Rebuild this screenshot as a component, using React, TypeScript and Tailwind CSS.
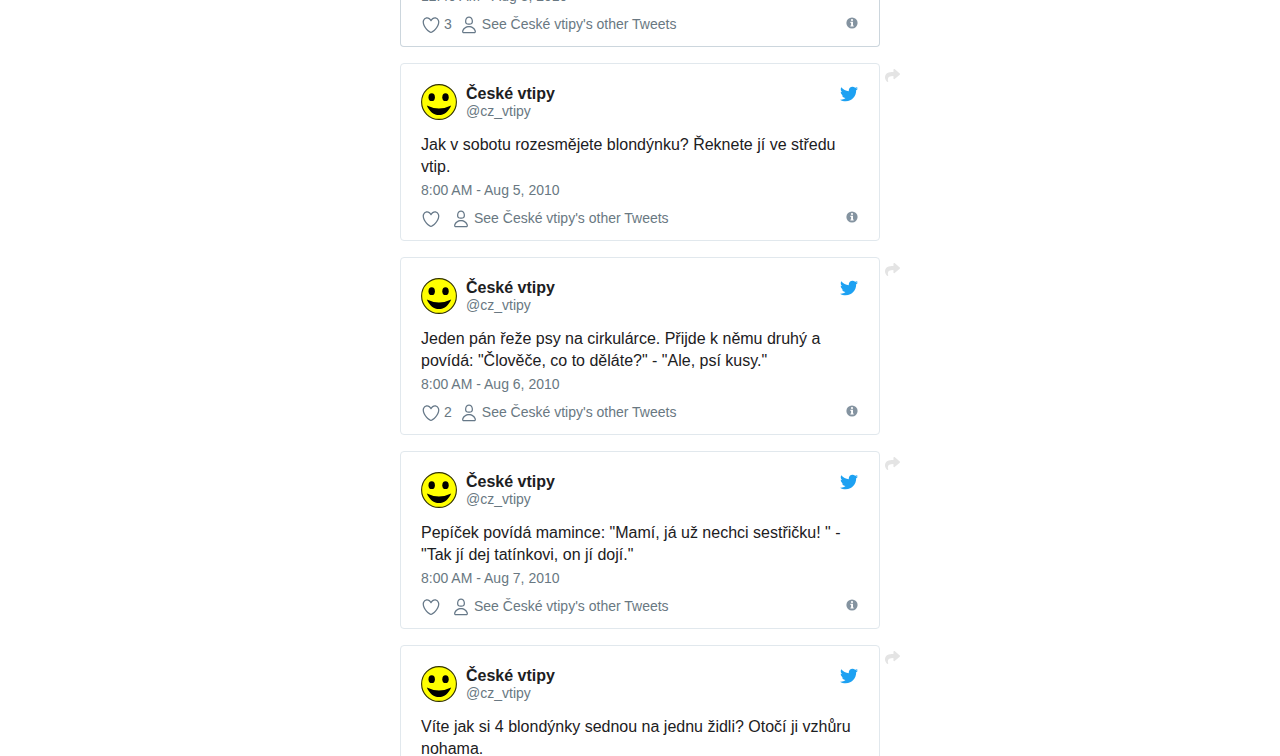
import React from "react";
import { FaShare, FaTwitter } from "react-icons/fa";

type Tweet = { text?: string; date: string; likes?: number };

const tweets: Tweet[] = [
  { text: "Jak v sobotu rozesmějete blondýnku? Řeknete jí ve středu vtip.", date: "8:00 AM - Aug 5, 2010" },
  { text: 'Jeden pán řeže psy na cirkulárce. Přijde k němu druhý a povídá: "Člověče, co to děláte?" - "Ale, psí kusy."', date: "8:00 AM - Aug 6, 2010", likes: 2 },
  { text: 'Pepíček povídá mamince: "Mamí, já už nechci sestřičku! " - "Tak jí dej tatínkovi, on jí dojí."', date: "8:00 AM - Aug 7, 2010" },
  { text: "Víte jak si 4 blondýnky sednou na jednu židli? Otočí ji vzhůru nohama.", date: "8:00 AM - Aug 8, 2010" },
];

function Smiley() {
  return (
    <svg viewBox="0 0 36 36" className="size-9 shrink-0" aria-hidden="true">
      <circle cx="18" cy="18" r="17.4" fill="#ffff00" stroke="#333300" strokeWidth="1.1" />
      <ellipse cx="10.7" cy="13.2" rx="3.2" ry="3.9" />
      <ellipse cx="24.5" cy="13.2" rx="3.2" ry="3.9" />
      <path d="M5.8 21.4Q18 27.4 30.2 21.4C27.5 27.6 23 31 18 31S8.500 27.600 5.800 21.400z" />
    </svg>
  );
}

function Heart() {
  return (
    <svg viewBox="0 0 24 24" className="mt-px size-5 text-[#667888]" fill="currentColor" aria-hidden="true">
      <path d="M12 21.638h-.014C9.403 21.59 1.95 14.856 1.95 8.478c0-3.064 2.525-5.754 5.403-5.754 2.29 0 3.83 1.58 4.646 2.73.814-1.148 2.354-2.73 4.645-2.73 2.88 0 5.404 2.69 5.404 5.755 0 6.376-7.454 13.11-10.037 13.157H12zM7.354 4.225c-2.08 0-3.903 1.988-3.903 4.255 0 5.74 7.034 11.596 8.55 11.658 1.518-.062 8.55-5.917 8.55-11.658 0-2.267-1.823-4.255-3.903-4.255-2.528 0-3.94 2.936-3.952 2.965-.23.562-1.156.562-1.387 0-.014-.03-1.425-2.965-3.954-2.965z" />
    </svg>
  );
}

function Person() {
  return (
    <svg viewBox="0 0 24 24" className="mt-px size-5 text-[#667888]" fill="currentColor" aria-hidden="true">
      <path d="M12 11.816c1.355 0 2.872-.15 3.84-1.256.814-.93 1.078-2.368.806-4.392-.38-2.825-2.117-4.512-4.646-4.512S7.734 3.343 7.354 6.17c-.272 2.022-.008 3.46.806 4.39.968 1.107 2.485 1.256 3.84 1.256zM8.84 6.368c.162-1.2.787-3.212 3.16-3.212s2.998 2.013 3.16 3.212c.207 1.55.057 2.627-.45 3.205-.455.52-1.266.743-2.71.743s-2.255-.223-2.71-.743c-.507-.578-.657-1.656-.45-3.205zm11.44 12.868c-.877-3.526-4.282-5.99-8.28-5.99s-7.403 2.464-8.28 5.99c-.172.692-.028 1.4.395 1.94.408.52 1.04.82 1.733.82h12.304c.693 0 1.325-.3 1.733-.82.424-.54.567-1.247.394-1.94zm-1.576 1.016c-.126.16-.316.246-.552.246H5.848c-.235 0-.426-.085-.552-.246-.137-.174-.18-.412-.12-.654.71-2.855 3.517-4.85 6.824-4.85s6.114 1.994 6.824 4.85c.06.242.017.48-.12.654z" />
    </svg>
  );
}

function Info() {
  return (
    <svg viewBox="0 0 12 12" className="size-3" aria-hidden="true">
      <circle cx="6" cy="6" r="5.6" fill="#8493a0" />
      <circle cx="6" cy="3" r="1.1" fill="#fff" />
      <path d="M4.4 4.8H7V8.4H7.7V9.6H4.4V8.4H5.1V6H4.4z" fill="#fff" />
    </svg>
  );
}

function Meta({ date, likes }: Tweet) {
  return (
    <div className="text-sm/5 text-[#697882]">
      <a href="#" className="block">{date}</a>
      <div className="mt-2 flex h-[21px] items-start">
        <a href="#" aria-label="Like" className="mr-[7px] flex items-start gap-[3px]">
          <Heart />
          <span>{likes}</span>
        </a>
        <a href="#" className="flex items-start gap-[3px]">
          <Person />
          <span>See České vtipy's other Tweets</span>
        </a>
        <a href="#" aria-label="Twitter Ads info and privacy" className="mt-[3px] mr-px ml-auto">
          <Info />
        </a>
      </div>
    </div>
  );
}

function Card({ tweet }: { tweet: Tweet }) {
  return (
    <li className="grid grid-cols-[1fr_minmax(0,480px)_1fr]">
      <article className="col-start-2 rounded border border-[#e1e8ed] px-5 pt-5 pb-[11px]">
        <header className="flex">
          <a href="#" className="flex gap-[9px]">
            <Smiley />
            <span className="flex flex-col">
              <span className="text-base/5 font-bold">České vtipy</span>
              <span className="text-sm/[14px] text-[#697882]">@cz_vtipy</span>
            </span>
          </a>
          <a href="#" aria-label="View on Twitter" className="mt-px mr-px ml-auto">
            <FaTwitter className="size-[18px] text-[#1da1f2]" />
          </a>
        </header>
        <p className="mt-[14px] mb-0.5 text-base/[22px]">{tweet.text}</p>
        <Meta {...tweet} />
      </article>
      <button type="button" aria-label="Share" className="ml-[5px] mt-[5px] self-start justify-self-start">
        <FaShare className="size-[15px] text-[#e4e4e4]" />
      </button>
    </li>
  );
}

export default function App() {
  return (
    <main className="h-screen overflow-hidden bg-white font-['Liberation_Sans',Arial,sans-serif] text-[#1c2022]">
      <div className="flex h-[47px] items-end justify-center overflow-hidden">
        <article className="w-full max-w-[480px] rounded-b border border-t-0 border-[#ccd6dd] px-5 pb-[11px]">
          <Meta date="12:40 AM - Aug 3, 2010" likes={3} />
        </article>
      </div>
      <ul className="mt-4 flex flex-col gap-4">
        {tweets.map((tweet) => (
          <Card key={tweet.date} tweet={tweet} />
        ))}
      </ul>
    </main>
  );
}
